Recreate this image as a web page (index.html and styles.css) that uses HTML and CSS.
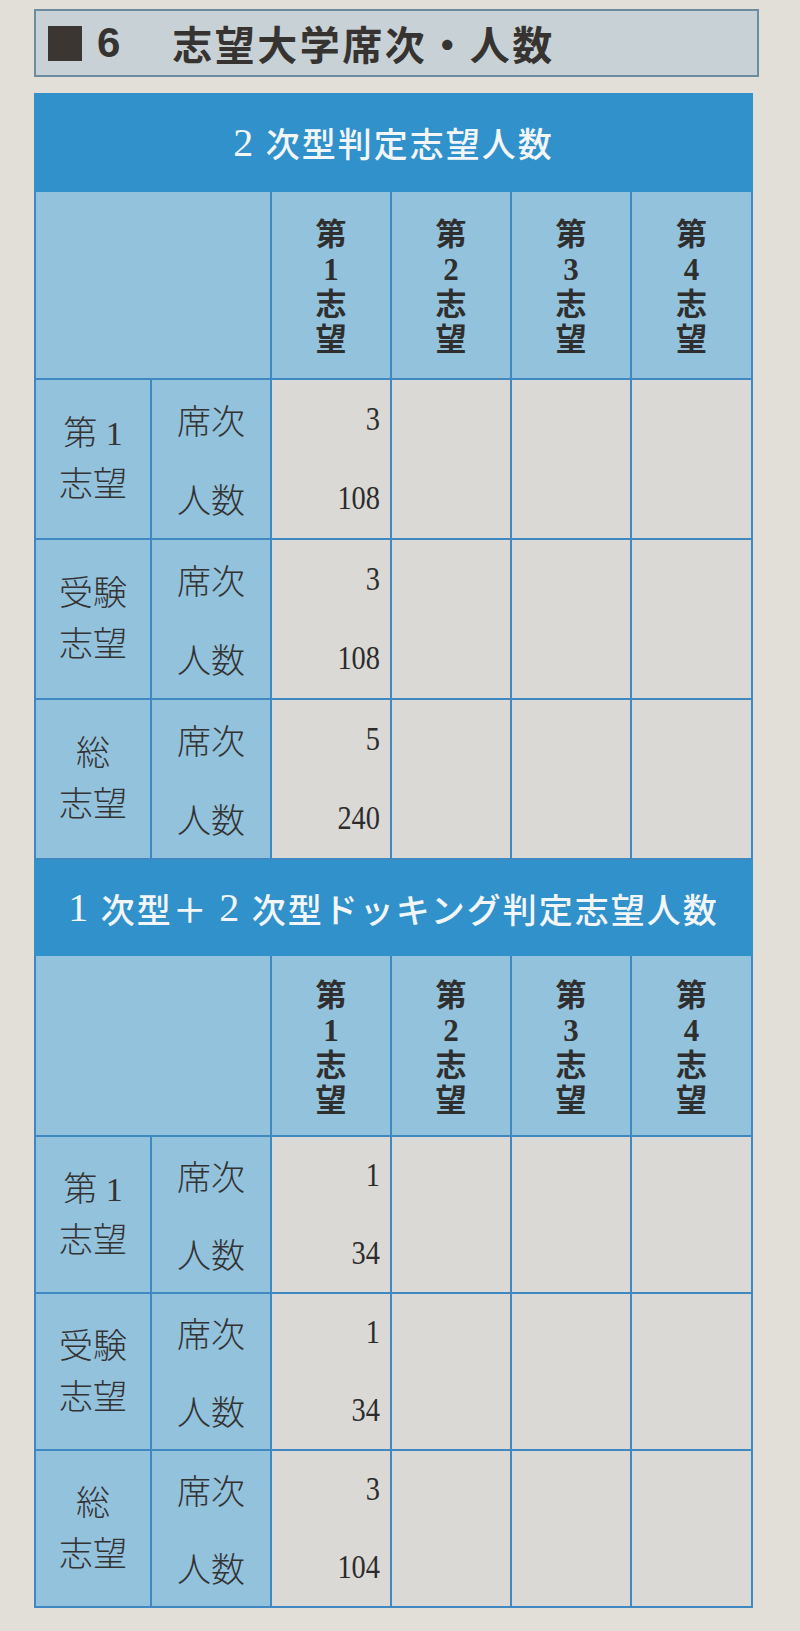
FILE: index.html
```html
<!DOCTYPE html>
<html lang="ja">
<head>
<meta charset="utf-8">
<title>志望大学席次・人数</title>
<link rel="stylesheet" href="styles.css">
</head>
<body>
<div class="page">
  <div class="title">
    <span class="sq"></span>
    <span class="num">6</span>
    <span class="ttl">志望大学席次・人数</span>
  </div>

  <div class="tbl">
    <div class="band b1"><span class="dg">2</span> 次型判定志望人数</div>
    <div class="row head h1">
      <div class="c lab span2"></div>
      <div class="c hd"><span>第</span><span>1</span><span>志</span><span>望</span></div>
      <div class="c hd"><span>第</span><span>2</span><span>志</span><span>望</span></div>
      <div class="c hd"><span>第</span><span>3</span><span>志</span><span>望</span></div>
      <div class="c hd"><span>第</span><span>4</span><span>志</span><span>望</span></div>
    </div>
    <div class="row grp g1">
      <div class="c lab la"><span>第 1</span><span>志望</span></div>
      <div class="c lab lb"><span>席次</span><span>人数</span></div>
      <div class="c val"><span>3</span><span>108</span></div>
      <div class="c val"></div><div class="c val"></div><div class="c val"></div>
    </div>
    <div class="row grp g1">
      <div class="c lab la"><span>受験</span><span>志望</span></div>
      <div class="c lab lb"><span>席次</span><span>人数</span></div>
      <div class="c val"><span>3</span><span>108</span></div>
      <div class="c val"></div><div class="c val"></div><div class="c val"></div>
    </div>
    <div class="row grp g1">
      <div class="c lab la"><span>総</span><span>志望</span></div>
      <div class="c lab lb"><span>席次</span><span>人数</span></div>
      <div class="c val"><span>5</span><span>240</span></div>
      <div class="c val"></div><div class="c val"></div><div class="c val"></div>
    </div>

    <div class="band b2"><span class="dg">1</span> 次型＋ <span class="dg">2</span> 次型ドッキング判定志望人数</div>
    <div class="row head h2">
      <div class="c lab span2"></div>
      <div class="c hd"><span>第</span><span>1</span><span>志</span><span>望</span></div>
      <div class="c hd"><span>第</span><span>2</span><span>志</span><span>望</span></div>
      <div class="c hd"><span>第</span><span>3</span><span>志</span><span>望</span></div>
      <div class="c hd"><span>第</span><span>4</span><span>志</span><span>望</span></div>
    </div>
    <div class="row grp g2">
      <div class="c lab la"><span>第 1</span><span>志望</span></div>
      <div class="c lab lb"><span>席次</span><span>人数</span></div>
      <div class="c val"><span>1</span><span>34</span></div>
      <div class="c val"></div><div class="c val"></div><div class="c val"></div>
    </div>
    <div class="row grp g2">
      <div class="c lab la"><span>受験</span><span>志望</span></div>
      <div class="c lab lb"><span>席次</span><span>人数</span></div>
      <div class="c val"><span>1</span><span>34</span></div>
      <div class="c val"></div><div class="c val"></div><div class="c val"></div>
    </div>
    <div class="row grp g2">
      <div class="c lab la"><span>総</span><span>志望</span></div>
      <div class="c lab lb"><span>席次</span><span>人数</span></div>
      <div class="c val"><span>3</span><span>104</span></div>
      <div class="c val"></div><div class="c val"></div><div class="c val"></div>
    </div>
  </div>
</div>
</body>
</html>
```

FILE: styles.css
```css
* { box-sizing: border-box; }

html, body {
  margin: 0;
  background: #e2dfd9;
}

body {
  font-family: "Liberation Serif", "Noto Sans CJK JP", serif;
  color: #333;
}

.page {
  padding: 9px 0 0 34px;
}

/* ---------- title ---------- */
.title {
  width: 725px;
  height: 68px;
  background: #c8d1d5;
  border: 2px solid #6e8ca0;
  display: flex;
  align-items: center;
  padding-left: 12px;
}

.sq {
  width: 34px;
  height: 35px;
  background: #3b3631;
  display: block;
}

.num {
  margin-left: 15px;
  font-family: "Liberation Sans", "Noto Sans CJK JP", sans-serif;
  font-weight: 700;
  font-size: 42px;
  line-height: 1;
  color: #363330;
}

.ttl {
  margin-left: 52px;
  font-family: "Noto Sans CJK JP", sans-serif;
  font-weight: 700;
  font-size: 40px;
  letter-spacing: 2.5px;
  line-height: 1;
  color: #363330;
}

/* ---------- table ---------- */
.tbl {
  margin-top: 16px;
  width: 719px;
}

.band {
  background: #3191ca;
  color: #f3f6f8;
  font-weight: 500;
  font-size: 34px;
  letter-spacing: 2px;
  display: flex;
  align-items: center;
  justify-content: center;
  white-space: pre;
}
.band .dg {
  font-size: 40px;
  line-height: 1;
}
.b1 { height: 99px; }
.b2 { height: 96px; }

.row {
  display: grid;
  grid-template-columns: 118px 120px 120px 120px 120px 121px;
}
.h1 { height: 188px; }
.h2 { height: 181px; }
.g1 { height: 160px; }
.g2 { height: 157px; }

.c {
  border-right: 2px solid #3f88c1;
  border-bottom: 2px solid #3f88c1;
}
.c:first-child {
  border-left: 2px solid #3f88c1;
}

.lab {
  background: #93c2dd;
}
.span2 {
  grid-column: span 2;
}

.hd {
  background: #93c2dd;
  display: flex;
  flex-direction: column;
  align-items: center;
  justify-content: center;
  padding-top: 4px;
  font-weight: 700;
  font-size: 31px;
  line-height: 35px;
  color: #2f2f2f;
}

.la {
  display: flex;
  flex-direction: column;
  align-items: center;
  justify-content: center;
  font-weight: 300;
  font-size: 34px;
  line-height: 51px;
  color: #333;
}

.lb {
  display: flex;
  flex-direction: column;
  font-weight: 300;
  font-size: 34px;
  color: #333;
}
.lb span {
  flex: 1;
  display: flex;
  align-items: center;
  justify-content: center;
}

.val {
  background: #dbd9d5;
  display: flex;
  flex-direction: column;
  padding-right: 10px;
  font-size: 33px;
  color: #2c2c2c;
}
.val span {
  flex: 1;
  display: flex;
  align-items: center;
  justify-content: flex-end;
  transform: scaleX(0.86);
  transform-origin: right center;
}
```
